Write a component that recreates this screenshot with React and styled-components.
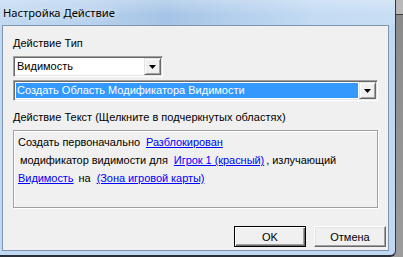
import React from 'react';
import styled, { createGlobalStyle } from 'styled-components';

const GlobalStyle = createGlobalStyle`
  html, body {
    margin: 0;
    padding: 0;
    background: #8e8e8e;
  }
  body {
    font-family: 'Liberation Sans', Arial, sans-serif;
    font-size: 11px;
    color: #000;
  }
`;

const ArrowDown = () => (
  <svg width="7" height="4" viewBox="0 0 7 4">
    <polygon points="0,0 7,0 3.5,4" fill="#000" />
  </svg>
);

const App = () => {
  return (
    <Desktop>
      <GlobalStyle />
      <Window>
        <TitleBar>Настройка Действие</TitleBar>
        <Client>
          <Label $top={11}>Действие Тип</Label>
          <Combo $w={150} $top={6}>
            <Field>Видимость</Field>
            <DropButton><ArrowDown /></DropButton>
          </Combo>
          <Combo $w={365} $top={3}>
            <Field $selected>Создать Область Модификатора Видимости</Field>
            <DropButton><ArrowDown /></DropButton>
          </Combo>
          <Label $top={10}>Действие Текст (Щелкните в подчеркнутых областях)</Label>
          <TextBox>
            <Line>
              Создать первоначально <Link>Разблокирован</Link>
            </Line>
            <Line $indent={2}>
              модификатор видимости для <Link>Игрок 1 (красный)</Link>, излучающий
            </Line>
            <Line>
              <Link $first>Видимость</Link> на <Link>(Зона игровой карты)</Link>
            </Line>
          </TextBox>
          <Buttons>
            <Button $default>OK</Button>
            <Button>Отмена</Button>
          </Buttons>
        </Client>
      </Window>
    </Desktop>
  );
};

const Desktop = styled.div`
  width: 403px;
  height: 257px;
  overflow: hidden;
  display: flex;
  background: linear-gradient(180deg, #b9b9b9 0px, #b9b9b9 14px, #3c3c3c 14px, #3c3c3c 15px, #8a8a8a 15px, #9c9c9c 100%);
`;

const Window = styled.div`
  width: 396px;
  height: 257px;
  box-sizing: border-box;
  display: flex;
  flex-direction: column;
  padding: 0 6px 4px 2px;
  background: #c0d9f2;
  border-right: 1px solid #2f3742;
  border-bottom: 2px solid #2a2f36;
  border-bottom-right-radius: 6px;
`;

const TitleBar = styled.div`
  height: 25px;
  margin: 0 -6px 0 -2px;
  padding-left: 3px;
  display: flex;
  align-items: center;
  font-family: 'Noto Sans', sans-serif;
  font-size: 11.2px;
  color: #000;
  text-shadow: 0 0 6px rgba(255, 255, 255, 0.9);
  background:
    linear-gradient(180deg, rgba(255, 255, 255, 0.25), rgba(255, 255, 255, 0) 60%),
    linear-gradient(90deg, #c2daf2 0%, #b8d2ee 22%, #a6c4e6 42%, #b3cfec 58%, #c3dbf3 80%, #c8def4 100%);
`;

const Client = styled.div`
  flex: 1;
  display: flex;
  flex-direction: column;
  align-items: flex-start;
  padding: 0 2px 0 10px;
  background: #f0f0f0;
  border: 1px solid #8194ad;
`;

const Label = styled.div`
  margin-top: ${p => p.$top}px;
  line-height: 13px;
  white-space: nowrap;
`;

const Combo = styled.div`
  margin-top: ${p => p.$top}px;
  width: ${p => p.$w}px;
  height: 21px;
  box-sizing: border-box;
  display: flex;
  padding: 1px;
  background: #fff;
  border: 1px solid;
  border-color: #a0a0a0 #fff #fff #a0a0a0;
  box-shadow: inset 1px 1px #696969, inset -1px -1px #e3e3e3;
`;

const Field = styled.div`
  flex: 1;
  margin: ${p => (p.$selected ? '1px' : '0')};
  padding-left: ${p => (p.$selected ? '1px' : '2px')};
  line-height: ${p => (p.$selected ? '15px' : '17px')};
  background: ${p => (p.$selected ? '#3399ff' : 'transparent')};
  color: ${p => (p.$selected ? '#fff' : '#000')};
  white-space: nowrap;
  overflow: hidden;
`;

const DropButton = styled.div`
  width: 17px;
  height: 17px;
  box-sizing: border-box;
  display: flex;
  align-items: center;
  justify-content: center;
  background: #f0f0f0;
  border: 1px solid;
  border-color: #e3e3e3 #696969 #696969 #e3e3e3;
  box-shadow: inset 1px 1px #fff, inset -1px -1px #a0a0a0;
`;

const TextBox = styled.div`
  margin-top: 6px;
  width: 365px;
  height: 78px;
  box-sizing: border-box;
  padding: 2px 4px 0 4px;
  border: 1px solid #a0a0a0;
  box-shadow: 1px 1px 0 #fff, inset 1px 1px 0 #fff;
`;

const Line = styled.div`
  padding-left: ${p => p.$indent || 0}px;
  line-height: 18px;
  white-space: nowrap;
  letter-spacing: -0.05px;
`;

const Link = styled.span`
  color: #0000ff;
  text-decoration: underline;
  margin-left: ${p => (p.$first ? 0 : 3)}px;
  margin-right: 2px;
`;

const Buttons = styled.div`
  align-self: stretch;
  display: flex;
  justify-content: flex-end;
  gap: 8px;
  margin-top: 18px;
`;

const Button = styled.div`
  width: 72px;
  height: 21px;
  box-sizing: border-box;
  display: flex;
  align-items: center;
  justify-content: center;
  background: #f0f0f0;
  border: 1px solid;
  border-color: ${p => (p.$default ? '#000' : '#fff #696969 #696969 #fff')};
  box-shadow: ${p => (p.$default
    ? 'inset 1px 1px #fff, inset -1px -1px #696969, inset -2px -2px #a0a0a0'
    : 'inset -1px -1px #a0a0a0, inset 1px 1px #e3e3e3')};
`;

export default App;
